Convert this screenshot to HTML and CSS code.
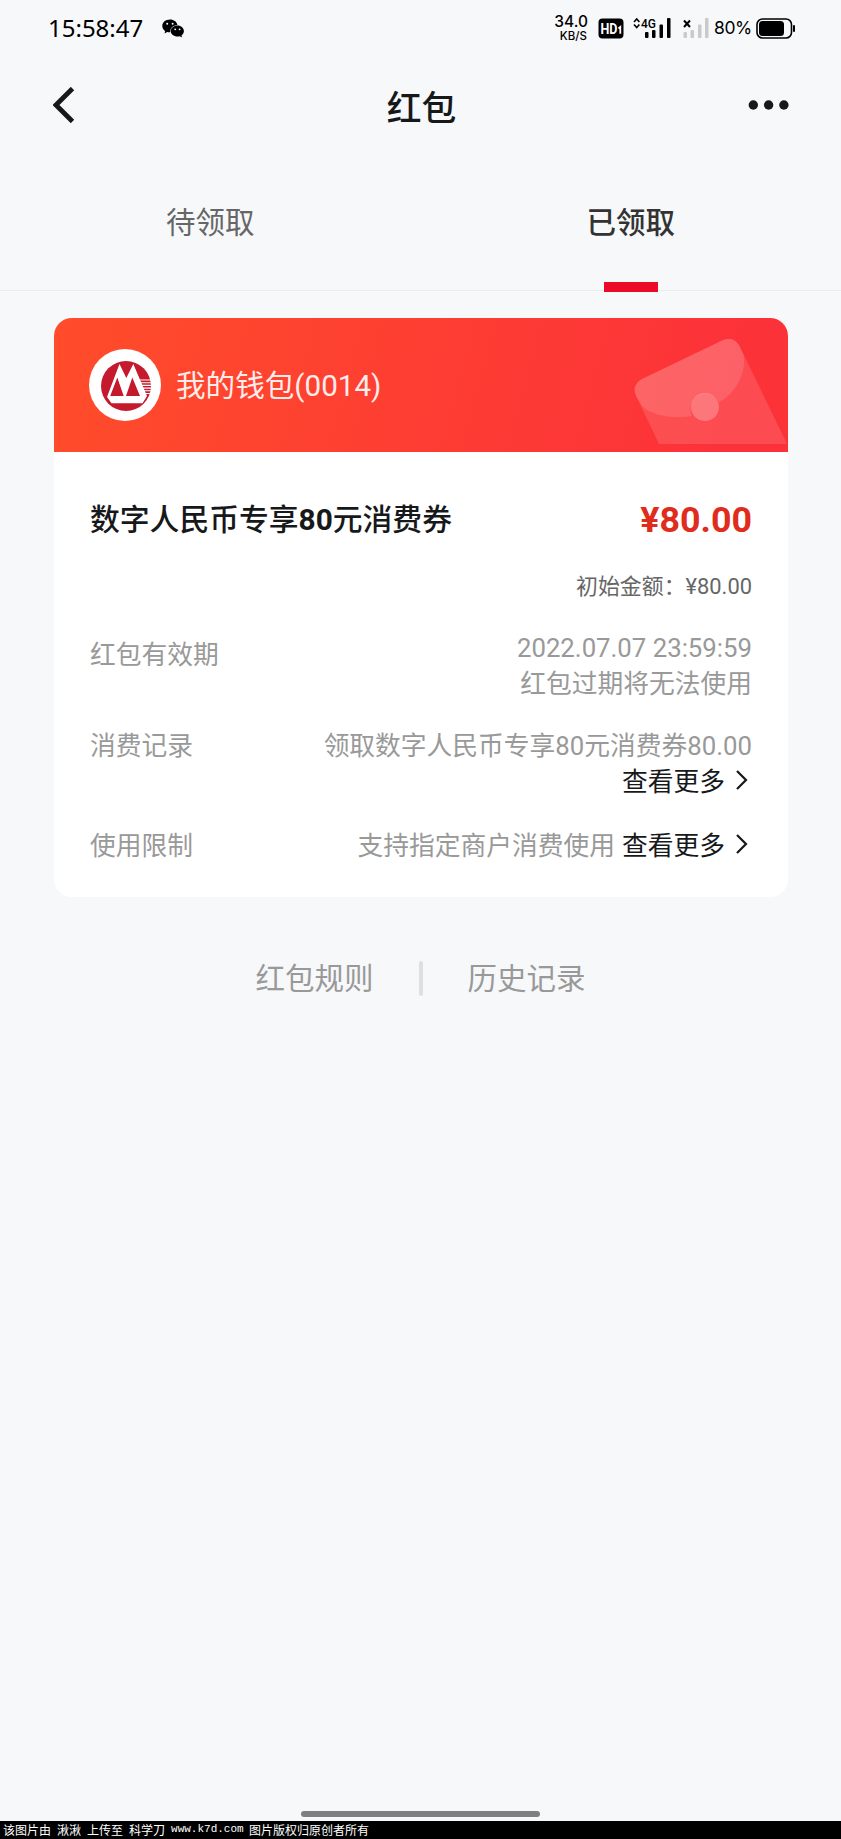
FILE: index.html
```html
<!DOCTYPE html>
<html lang="zh-CN">
<head>
<meta charset="utf-8">
<title>红包</title>
<link rel="stylesheet" href="styles.css">
</head>
<body>
<div class="screen">
  <header class="status">
    <span class="clock">15:58:47</span>
    <svg class="chat" width="23" height="19" viewBox="0 0 23 19">
      <path d="M8 0.5C3.6 0.5.3 3.3.3 6.9c0 2 1.1 3.8 2.8 5L2.6 14.4l2.6-1.4c1 .3 2 .4 3 .3C7.8 9.400 11 6.200 15.400 6C14.800 2.800 11.800.5 8 .5z"/>
      <path d="M15.500 6.600c-3.800 0-6.800 2.500-6.800 5.500s3 5.500 6.800 5.500c.8 0 1.600-.1 2.300-.3l2.200 1.200-.5-2c1.500-1 2.400-2.600 2.400-4.400 0-3-2.800-5.500-6.400-5.500z"/>
      <g fill="#f7f8fa"><circle cx="5.200" cy="4.800" r="1"/><circle cx="10.600" cy="4.800" r="1"/><circle cx="13.200" cy="10.300" r=".9"/><circle cx="17.600" cy="10.300" r=".9"/></g>
    </svg>
    <div class="speed"><span class="rate">34.0</span><span class="unit">KB/S</span></div>
    <svg class="hd" width="26" height="21" viewBox="0 0 26 21">
      <rect x=".5" y=".5" width="25" height="20" rx="4"/>
      <text class="hd-text" x="2.500" y="15.800" textLength="17" lengthAdjust="spacingAndGlyphs">HD</text>
      <path d="M20.500 10.500l1.800-1.500v6.800" fill="none" stroke="#fff" stroke-width="1.800"/>
    </svg>
    <svg class="net" width="38" height="22" viewBox="0 0 38 22">
      <path d="M1 5l2.700-3 2.700 3M1 7.500l2.700 3 2.700-3" fill="none" stroke="#000" stroke-width="1.600"/>
      <text class="net-text" x="8" y="10.500" textLength="15" lengthAdjust="spacingAndGlyphs">4G</text>
      <g><rect x="12" y="15" width="3.500" height="6" rx="1"/><rect x="19" y="13" width="3.500" height="8" rx="1"/><rect x="26.500" y="7.500" width="3.500" height="13.500" rx="1"/><rect x="34" y="1" width="3.500" height="20" rx="1"/></g>
    </svg>
    <svg class="nosim" width="26" height="22" viewBox="0 0 26 22">
      <path d="M1 3.500l6 6.500M7 3.500l-6 6.500" stroke="#000" stroke-width="2"/>
      <g fill="#c9cacb"><rect x=".5" y="15" width="3.500" height="6" rx="1"/><rect x="7.500" y="13" width="3.500" height="8" rx="1"/><rect x="15" y="7.500" width="3.500" height="13.500" rx="1"/><rect x="22" y="1" width="3.500" height="20" rx="1"/></g>
    </svg>
    <span class="percent">80%</span>
    <svg class="battery" width="40" height="21" viewBox="0 0 40 21">
      <rect x="1" y="1" width="34.500" height="19" rx="5.500" fill="none" stroke="#000" stroke-width="1.600"/>
      <rect x="3" y="3" width="25" height="15" rx="3.500"/>
      <rect x="37" y="7" width="2" height="7" rx="1"/>
    </svg>
  </header>

  <nav class="navbar">
    <svg class="back" width="22" height="36" viewBox="0 0 22 36"><path d="M19.500 1.500L3 18l16.500 16.500" fill="none" stroke="#17181a" stroke-width="4.800"/></svg>
    <h1 class="title">红包</h1>
    <svg class="more" width="42" height="10" viewBox="0 0 42 10"><circle cx="5.300" cy="5" r="4.700"/><circle cx="20.600" cy="5" r="4.700"/><circle cx="35.900" cy="5" r="4.700"/></svg>
  </nav>

  <div class="tabs">
    <div class="tab">待领取</div>
    <div class="tab active">已领取</div>
  </div>

  <main class="card">
    <div class="card-head">
      <svg class="logo" width="72" height="72" viewBox="0 0 72 72">
        <circle cx="36" cy="36" r="36" fill="#fff"/>
        <circle cx="37" cy="37" r="25" fill="#c51a2e"/>
        <path d="M50 31h13M51 33.700h12M52 36.400h11M53 39.100h10M54 41.800h8.500M55 44.500h6.500" stroke="#fff" stroke-width="1.100"/>
        <path d="M30.500 15l6.800 14L44.300 15 58 47l-4.500 7.300H22.500L18 48z" fill="#fff"/>
        <path d="M28.300 28.500L21.200 47h13.500zM43.300 28.500L37 47h14z" fill="#c51a2e"/>
      </svg>
      <span class="wallet">我的钱包(0014)</span>
      <svg class="envelope" width="154" height="106" viewBox="0 0 154 106">
        <path d="M8 40L88 1.500C96-2 102 0 106 8L153 105H25L2 57C-1 50 1 44 8 40z" fill="#fff" fill-opacity=".13"/>
        <path d="M8 40L88 1.500C96-2 102 0 106 8L109.500 16C113 34 100 56 85 63A14 14 0 0 0 58 77C40 80 18 77 8 67L2 57C-1 50 1 44 8 40z" fill="#fff" fill-opacity=".12"/>
        <circle cx="71" cy="68" r="14" fill="#fff" fill-opacity=".24"/>
      </svg>
    </div>
    <div class="card-body">
      <div class="coupon"><h2 class="name">数字人民币专享<b>80</b>元消费券</h2><span class="amount">¥80.00</span></div>
      <div class="initial">初始金额：¥80.00</div>
      <div class="row"><span class="label lowered">红包有效期</span><div class="value">2022.07.07 23:59:59<br>红包过期将无法使用</div></div>
      <div class="row"><span class="label">消费记录</span><div class="value">领取数字人民币专享80元消费券80.00<br><a class="link">查看更多<svg class="chev" width="12" height="22" viewBox="0 0 12 22"><path d="M1 2l9 9L1 20" fill="none" stroke="#17181a" stroke-width="2.200"/></svg></a></div></div>
      <div class="row last"><span class="label">使用限制</span><div class="value">支持指定商户消费使用<a class="link inline">查看更多<svg class="chev" width="12" height="22" viewBox="0 0 12 22"><path d="M1 2l9 9L1 20" fill="none" stroke="#17181a" stroke-width="2.200"/></svg></a></div></div>
    </div>
  </main>

  <div class="links"><a>红包规则</a><i class="divider"></i><a>历史记录</a></div>
  <div class="home"></div>
  <footer class="credit"><span>该图片由</span><span>湫湫</span><span>上传至</span><span>科学刀</span><span class="site">www.k7d.com</span><span>图片版权归原创者所有</span></footer>
</div>
</body>
</html>
```
FILE: styles.css
```css
* { box-sizing: border-box; }
body { margin: 0; background: #f7f8fa; font-family: Roboto, "Noto Sans CJK SC", sans-serif; }
.screen { width: 841px; height: 1839px; display: flex; flex-direction: column; overflow: hidden; }
svg { display: block; flex: none; }

.status { height: 56px; padding-left: 48px; display: flex; align-items: center; color: #000; }
.clock { width: 96px; font: 24px/56px "Noto Sans", sans-serif; white-space: nowrap; }
.chat { margin-left: 18px; }
.speed { margin-left: 370px; width: 33px; display: flex; flex-direction: column; align-items: flex-end; font-family: Inter, sans-serif; font-weight: 500; }
.rate { font-size: 15.500px; line-height: 14px; }
.unit { font-size: 11.500px; line-height: 12px; padding: 1px 1px 0 0; }
.hd { margin-left: 10px; }
.hd-text { font: 700 14px Roboto, sans-serif; fill: #fff; }
.net { margin-left: 9px; }
.net-text { font: 500 13px Roboto, sans-serif; }
.nosim { margin-left: 12px; }
.percent { margin-left: 5px; width: 37px; font: 17.500px/54px Inter, sans-serif; letter-spacing: -.4px; white-space: nowrap; }
.battery { margin-left: 5px; }

.navbar { height: 100px; padding: 0 51px 0 53px; display: grid; grid-template-columns: 42px 1fr 42px; align-items: center; }
.title { margin: 5px 0 0; font-size: 34.800px; line-height: 48px; font-weight: 500; text-align: center; color: #17181a; }
.back { margin-top: -2px; }
.more { fill: #17181a; margin-top: -2px; }

.tabs { height: 135px; display: flex; border-bottom: 1px solid #ebecee; margin-bottom: 27px; }
.tab { flex: 1; height: 136px; padding-top: 43px; display: flex; flex-direction: column; justify-content: space-between; align-items: center; font-size: 29.500px; line-height: 48px; color: #666; }
.active { color: #333; font-weight: 500; }
.active::after { content: ""; width: 54px; height: 10px; background: #eb0a27; }

.card { width: 734px; height: 579px; margin-left: 54px; background: #fff; border-radius: 18px; overflow: hidden; flex: none; }
.card-head { height: 134px; padding-left: 35px; display: flex; align-items: center; background: linear-gradient(105deg, #ff4c2a, #fc3239 90%); }
.wallet { margin: -4px 0 0 15px; font-size: 29.600px; color: #ffeceb; }
.envelope { margin-left: auto; align-self: flex-end; margin-bottom: 7px; }
.card-body { padding: 44px 36px 0; color: #999; font-size: 25.750px; line-height: 36px; }
.coupon { height: 48px; display: flex; justify-content: space-between; align-items: center; }
.name { margin: 0; font-size: 29.800px; font-weight: 500; color: #17181a; }
.amount { font-size: 35.800px; font-weight: 700; color: #df2c1c; }
.initial { margin-top: 25px; height: 36px; text-align: right; font-size: 21.900px; color: #666; }
.row { display: flex; justify-content: space-between; margin-top: 26px; }
.initial + .row { margin-top: 25px; }
.row.last { margin-top: 28px; }
.lowered { padding-top: 7px; }
.value { text-align: right; }
.link { display: inline-flex; align-items: center; vertical-align: top; color: #17181a; padding-right: 4px; }
.inline { margin-left: 7px; }
.chev { margin: -4px 0 0 11px; }

.links { margin-top: 56px; height: 50px; display: flex; justify-content: center; align-items: center; font-size: 29.500px; color: #999; }
.links a { margin-top: -4px; }
.divider { width: 4px; height: 35px; margin: 0 45px; background: #dddfe1; border-radius: 2px; }
.home { width: 239px; height: 6px; margin: auto auto 4px 301px; border-radius: 3px; background: #7f7f7f; }
.credit { height: 18px; padding-left: 3px; display: flex; gap: 6px; background: #000; color: #fff; font: 12px/17px "Noto Sans CJK SC", sans-serif; white-space: nowrap; }
.site { width: 72px; font-family: "Liberation Mono", monospace; font-size: 11px; }
```
